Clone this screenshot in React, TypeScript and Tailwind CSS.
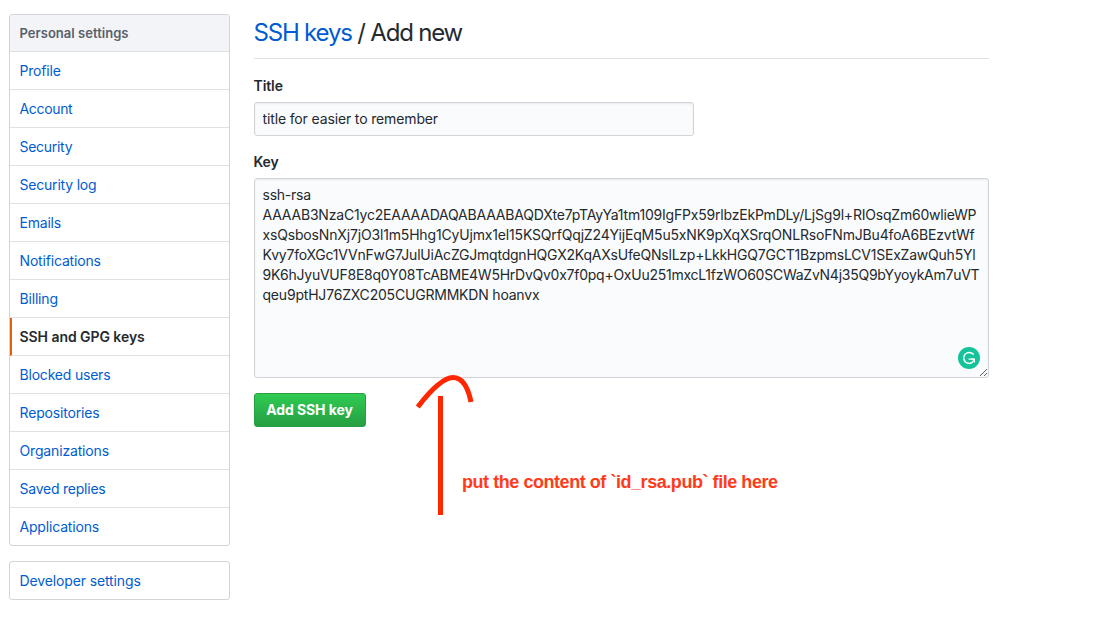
const links = [
  { label: "Profile", tracking: "tracking-[-0.2px]" },
  { label: "Account", tracking: "tracking-[-0.33px]" },
  { label: "Security", tracking: "tracking-[-0.28px]" },
  { label: "Security log", tracking: "tracking-[-0.2px]" },
  { label: "Emails", tracking: "tracking-[-0.22px]" },
  { label: "Notifications", tracking: "tracking-[-0.17px]" },
  { label: "Billing", tracking: "tracking-[-0.18px]" },
  { label: "SSH and GPG keys", tracking: "tracking-[-0.06px]", active: true },
  { label: "Blocked users", tracking: "tracking-[-0.2px]" },
  { label: "Repositories", tracking: "tracking-[-0.16px]" },
  { label: "Organizations", tracking: "tracking-[-0.16px]" },
  { label: "Saved replies", tracking: "tracking-[-0.23px]" },
  { label: "Applications", tracking: "tracking-[-0.18px]" },
];

const keyLines = [
  { text: "ssh-rsa", tracking: "tracking-[-0.25px]" },
  { text: "AAAAB3NzaC1yc2EAAAADAQABAAABAQDXte7pTAyYa1tm109IgFPx59rlbzEkPmDLy/LjSg9l+RIOsqZm60wlieWP", tracking: "tracking-[-0.2px]" },
  { text: "xsQsbosNnXj7jO3l1m5Hhg1CyUjmx1el15KSQrfQqjZ24YijEqM5u5xNK9pXqXSrqONLRsoFNmJBu4foA6BEzvtWf", tracking: "tracking-[-0.165px]" },
  { text: "Kvy7foXGc1VVnFwG7JulUiAcZGJmqtdgnHQGX2KqAXsUfeQNslLzp+LkkHGQ7GCT1BzpmsLCV1SExZawQuh5Yl", tracking: "tracking-[-0.22px]" },
  { text: "9K6hJyuVUF8E8q0Y08TcABME4W5HrDvQv0x7f0pq+OxUu251mxcL1fzWO60SCWaZvN4j35Q9bYyoykAm7uVT", tracking: "tracking-[-0.25px]" },
  { text: "qeu9ptHJ76ZXC205CUGRMMKDN hoanvx", tracking: "tracking-[-0.2px]" },
];

function GrammarlyBadge() {
  return (
    <svg className="absolute right-[8px] bottom-[8px] h-[22px] w-[22px]" viewBox="0 0 22 22" fill="none">
      <circle cx="11" cy="11" r="11" fill="#15c39a" />
      <path d="M15.2 7.1A5.5 5.5 0 1 0 14.6 15.2" stroke="#fff" strokeWidth="1.5" strokeLinecap="round" />
      <path d="M11 12.1H15.6" stroke="#fff" strokeWidth="1.4" strokeLinecap="round" />
      <path d="M12.9 11.4H17V16L15.3 14.4L13.9 15.6L15.1 13Z" fill="#fff" />
    </svg>
  );
}

function ResizeGrip() {
  return (
    <svg className="absolute right-0 bottom-0 h-[9px] w-[9px]" viewBox="0 0 9 9" fill="none" stroke="#4b4d50" strokeWidth="0.9">
      <path d="M1 8L8 1M5 8L8 5" />
    </svg>
  );
}

function Arrow() {
  return (
    <svg className="pointer-events-none absolute left-[410px] top-[368px] h-[150px] w-[70px]" viewBox="0 0 70 150" fill="none" stroke="#ff2600" strokeWidth="5">
      <path d="M30.5 28V147" />
      <path d="M7.8 39C17 27 31 10 43 9.6C54 9.5 58.5 22 61 34" />
    </svg>
  );
}

export default function App() {
  return (
    <div className="relative flex h-[633px] w-[1112px] gap-[23.5px] overflow-hidden bg-white pl-[9px] pt-[14px] font-['Inter',sans-serif] text-[14px] leading-5 text-[#24292e]">
      <aside className="flex w-[221px] shrink-0 flex-col gap-[15px]">
        <nav className="overflow-hidden rounded-[3px] border border-[#d1d5da]">
          <h3 className="flex h-[37px] items-center border-b border-[#dfe2e5] bg-[#f3f4f8] px-[9.5px] text-[13px] font-semibold tracking-[0.03px] text-[#586069]">
            Personal settings
          </h3>
          {links.map((l) => (
            <a
              key={l.label}
              className={
                l.active
                  ? "flex h-[38px] items-center border-b border-l-2 border-b-[#dfe2e5] border-l-[#e36209] pl-[7.5px] font-semibold"
                  : "flex h-[38px] items-center border-b border-[#dfe2e5] px-[9.5px] text-[#005cd1] last:h-[37px] last:border-b-0"
              }
            >
              <span className={l.tracking}>{l.label}</span>
            </a>
          ))}
        </nav>
        <nav className="rounded-[3px] border border-[#d1d5da]">
          <a className="flex h-[37px] items-center px-[9.5px] tracking-[-0.13px] text-[#005cd1]">Developer settings</a>
        </nav>
      </aside>

      <main className="w-[735.5px]">
        <h2 className="h-[45px] whitespace-pre border-b border-[#dfe2e5] pt-[1px] text-[24px] leading-9 tracking-[-1.19px]">
          <a className="text-[#005cd1]">SSH keys</a> / Add new
        </h2>
        <label className="mt-[17px] block font-semibold tracking-[-0.1px]">Title</label>
        <input
          className="mt-[6px] block h-[34px] w-[440px] rounded-[3px] border border-[#d1d5da] bg-[#fafbfc] px-[8px] pb-[2px] tracking-[-0.14px] shadow-[inset_0_1px_2px_rgba(27,31,35,0.075)] outline-none"
          defaultValue="title for easier to remember"
        />
        <label className="mt-4 block font-semibold tracking-[-0.2px]">Key</label>
        <div className="relative mt-[6px] h-[200px] rounded-[3px] border border-[#d1d5da] bg-[#fafbfc] px-[8px] pt-[6px] shadow-[inset_0_1px_2px_rgba(27,31,35,0.075)]">
          {keyLines.map((l) => (
            <p key={l.text} className="whitespace-pre">
              <span className={l.tracking}>{l.text}</span>
            </p>
          ))}
          <GrammarlyBadge />
          <ResizeGrip />
        </div>
        <button className="mt-[15px] block h-[34px] w-[112px] rounded-[3px] border border-[#279f43] bg-linear-to-b from-[#2fcb53] to-[#269f42] font-bold tracking-[-0.08px] text-white">
          Add SSH key
        </button>
        <p className="ml-[208.5px] mt-[43px] w-fit whitespace-pre font-['Liberation_Sans',sans-serif] text-[18px] font-bold leading-6 tracking-[-0.45px] text-[#ff3b1a]">
          put the content of `id_rsa.pub` file here
        </p>
      </main>
      <Arrow />
    </div>
  );
}
